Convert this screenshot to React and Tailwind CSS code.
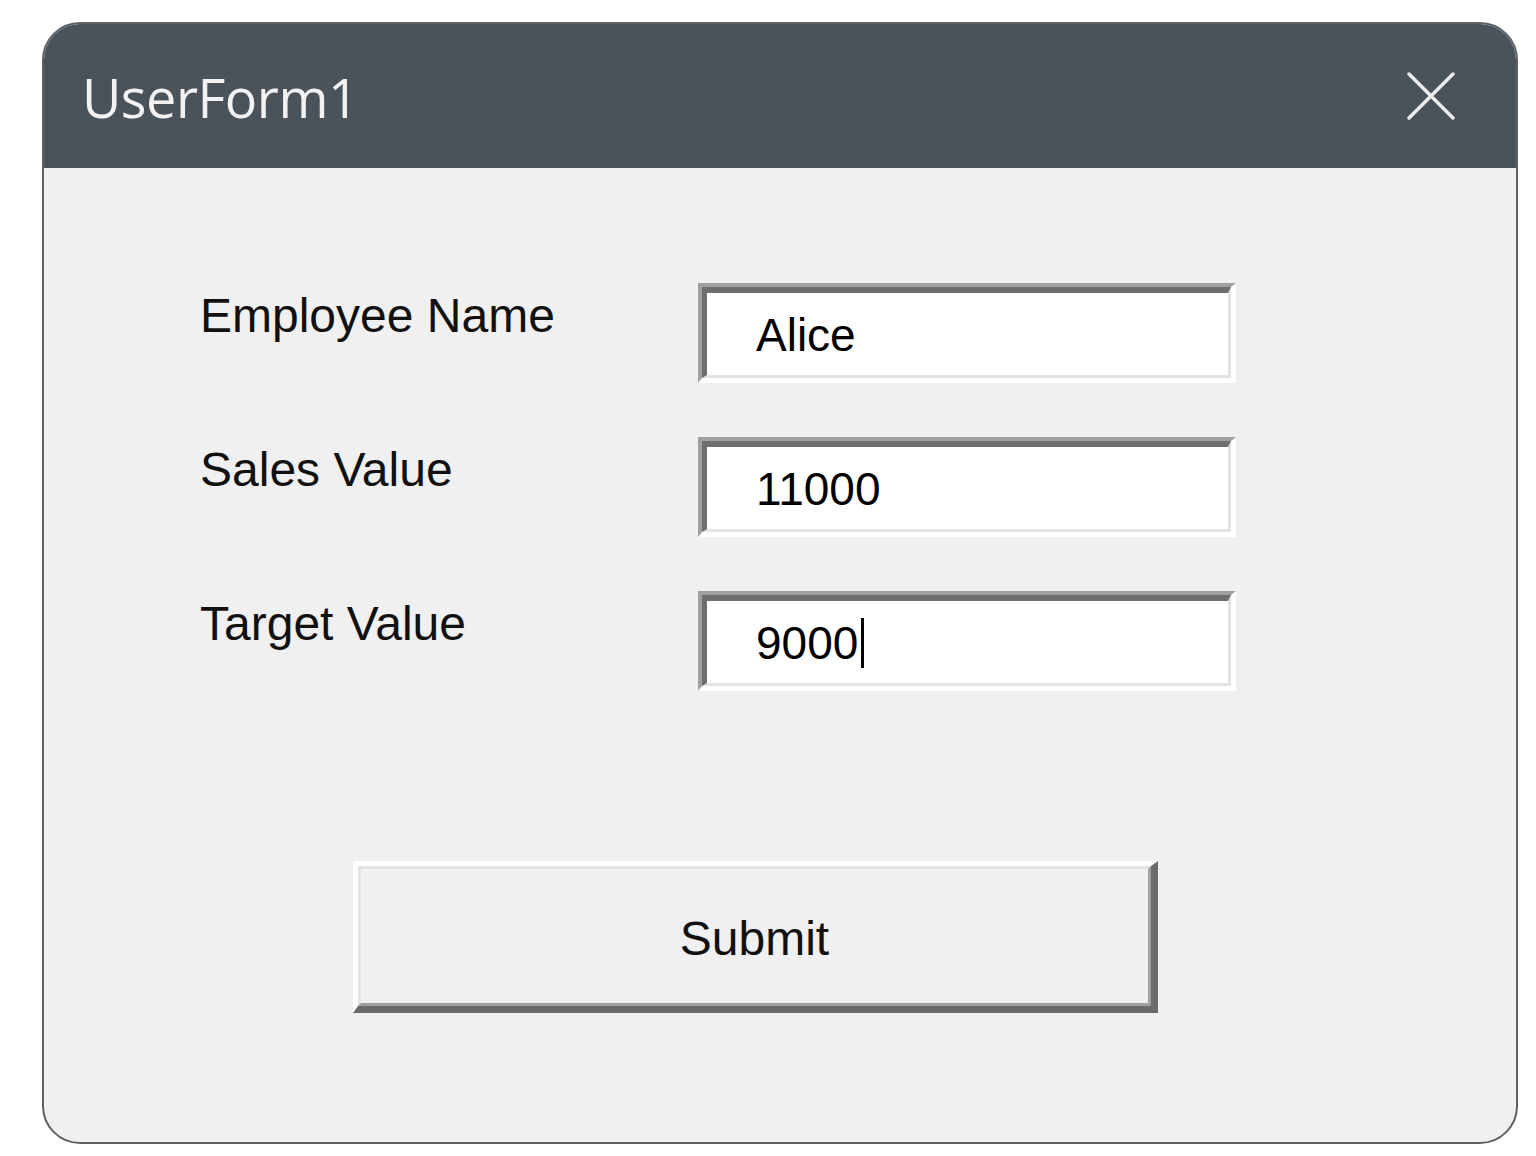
import React from "react";

const font = { fontFamily: '"Liberation Sans", Arial, sans-serif' };

function TextBox({ value, caret }) {
    return (
        <div className="w-[538px] h-[100px] border-t-[4px] border-l-[4px] border-t-[#a0a0a0] border-l-[#a0a0a0] border-r-[5px] border-b-[5px] border-r-white border-b-white">
            <div className="w-full h-full bg-white border-t-[6px] border-l-[5px] border-t-[#6e6e6e] border-l-[#6e6e6e] border-r-[3px] border-b-[3px] border-r-[#e3e3e3] border-b-[#e3e3e3] flex items-center pl-[49px] pt-[1px]">
                <span className="text-[46px] leading-none text-black">{value}</span>
                {caret && <span className="inline-block w-[3px] h-[50px] bg-black ml-[3px]" />}
            </div>
        </div>
    );
}

function Row({ label, value, caret }) {
    return (
        <div className="flex items-start">
            <div className="w-[498px] mt-[9px] text-[48px] leading-none text-[#111]">{label}</div>
            <TextBox value={value} caret={caret} />
        </div>
    );
}

export default function App() {
    return (
        <div className="w-[1536px] h-[1156px] bg-white pt-[22px] pl-[42px]" style={font}>
            <div className="w-[1476px] h-[1122px] border-2 border-[#5b6167] rounded-[38px] overflow-hidden bg-[#f0f0f0] flex flex-col">
                {/* title bar */}
                <div className="h-[144px] shrink-0 bg-[#4b535a] flex items-center justify-between pl-[38px] pr-[61px]">
                    <span className="text-[54px] leading-none text-[#f2f2f2] pt-[2px] tracking-[-0.5px]" style={{ fontFamily: '"Open Sans", "Noto Sans", sans-serif' }}>
                        UserForm1
                    </span>
                    <svg width="48" height="48" viewBox="0 0 48 48" className="text-[#ececec]">
                        <path d="M2 2 L46 46 M46 2 L2 46" stroke="currentColor" strokeWidth="3.5" strokeLinecap="round" />
                    </svg>
                </div>

                {/* form body */}
                <div className="flex flex-col pt-[115px] pl-[156px]">
                    <div className="flex flex-col gap-[54px]">
                        <Row label="Employee Name" value="Alice" />
                        <Row label="Sales Value" value="11000" />
                        <Row label="Target Value" value="9000" caret />
                    </div>

                    <div className="mt-[170px] ml-[153px] w-[805px] h-[152px] border-t-[5px] border-l-[5px] border-t-white border-l-white border-r-[7px] border-b-[7px] border-r-[#6a6a6a] border-b-[#6a6a6a]">
                        <div className="w-full h-full border-t-[3px] border-l-[3px] border-t-[#e3e3e3] border-l-[#e3e3e3] border-r-[3px] border-b-[3px] border-r-[#a0a0a0] border-b-[#a0a0a0] flex items-center justify-center">
                            <span className="text-[48px] leading-none text-[#111] pt-[6px]">Submit</span>
                        </div>
                    </div>
                </div>
            </div>
        </div>
    );
}
